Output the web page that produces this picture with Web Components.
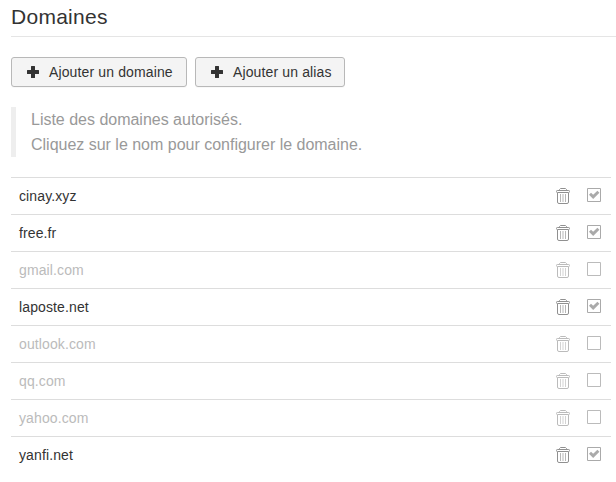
<!DOCTYPE html>
<html lang="fr"><head><meta charset="utf-8"><title>Domaines</title>
<style>body{margin:0;background:#fff;font-family:"Liberation Sans",Arial,sans-serif;color:#333}</style></head>
<body><domain-page></domain-page>
<script>
const define=(name,html)=>customElements.define(name,class extends HTMLElement{
 constructor(){super();this.attachShadow({mode:'open'}).innerHTML=html;}
});
define('tool-button',`<style>
:host{display:flex;box-sizing:border-box;height:30px;padding:0 0 0 15px;align-items:center;gap:10px;border:1px solid #b8b8b8;border-radius:3px;background:#f4f4f4;font-size:14px;line-height:20px;letter-spacing:.13px;white-space:nowrap;box-shadow:0 1px 1px #00000008}
svg{display:block;width:12px;height:12px}</style>
<svg viewBox="0 0 12 12"><path fill="#333" d="M4 .5q0-.5.5-.5h3q.5 0 .5.500V4h3.500q.5 0 .5.500v3q0 .5-.5.500H8v3.500q0 .5-.5.500h-3q-.5 0-.5-.5V8H.5Q0 8 0 7.500v-3Q0 4 .5 4H4z"/></svg><span><slot></slot></span>`);
define('info-note',`<style>:host{display:block;box-sizing:border-box;height:50px;margin:20px 0 20px;padding-left:15px;border-left:5px solid #eee;color:#999;font-size:16px;line-height:25px;letter-spacing:-.01px}</style><slot></slot>`);
define('trash-icon',`<style>:host{display:block;width:14px;height:16px}svg{display:block}</style>
<svg width="14" height="16" viewBox="0 0 14 16" fill="none" stroke="currentColor"><path d="M3.5 2.500V1.500l1-1h5l1 1v1"/><rect x=".5" y="2.500" width="13" height="2" rx=".8"/><path d="M1.500 5v9q0 1.500 1.500 1.500h8q1.500 0 1.500-1.500V5"/><path stroke-opacity=".65" d="M4.500 6v8M7 6v8M9.500 6v8"/></svg>`);
define('check-icon',`<style>:host{display:block;width:14px;height:14px}svg{display:block}path.tick{display:none}:host([checked]) .tick{display:block}</style>
<svg width="14" height="14" viewBox="0 0 14 14" fill="none" stroke="currentColor"><path d="M.5.5h13v13H.5z"/><path class="tick" stroke-width="2.900" d="M3 5.700l3.200 3.200 5.200-5.200"/></svg>`);
customElements.define('domain-row',class extends HTMLElement{
 constructor(){super();this.attachShadow({mode:'open'}).innerHTML=`<style>
:host{display:flex;box-sizing:border-box;height:37px;border-top:1px solid #ddd;padding:0 10px 0 8px;align-items:center;font-size:14px;line-height:20px;letter-spacing:.12px}
.name{flex:1}trash-icon{color:#909090;margin-right:17px}check-icon{color:#aaa;margin-bottom:2px}
:host([disabled]) .name{color:#bbb}:host([disabled]) trash-icon{color:#bbb}:host([disabled]) check-icon{color:#bbb}
</style><span class="name"><slot></slot></span><trash-icon></trash-icon><check-icon></check-icon>`;
 if(!this.hasAttribute('disabled'))this.shadowRoot.querySelector('check-icon').setAttribute('checked','');}
});
define('domain-page',`<style>
:host{display:block;padding:0 5px 0 11px}
header{box-sizing:border-box;height:37px;margin-right:-5px;border-bottom:1px solid #e5e5e5;font-size:21px;line-height:34px;letter-spacing:.27px}
nav{display:grid;grid-template-columns:176px 150px;gap:8px;margin-top:20px}</style>
<header>Domaines</header><nav><tool-button>Ajouter un domaine</tool-button><tool-button>Ajouter un alias</tool-button></nav>
<info-note>Liste des domaines autorisés.<br>Cliquez sur le nom pour configurer le domaine.</info-note>
<main><domain-row>cinay.xyz</domain-row><domain-row>free.fr</domain-row><domain-row disabled>gmail.com</domain-row><domain-row>laposte.net</domain-row><domain-row disabled>outlook.com</domain-row><domain-row disabled>qq.com</domain-row><domain-row disabled>yahoo.com</domain-row><domain-row>yanfi.net</domain-row></main>`);
</script></body></html>
